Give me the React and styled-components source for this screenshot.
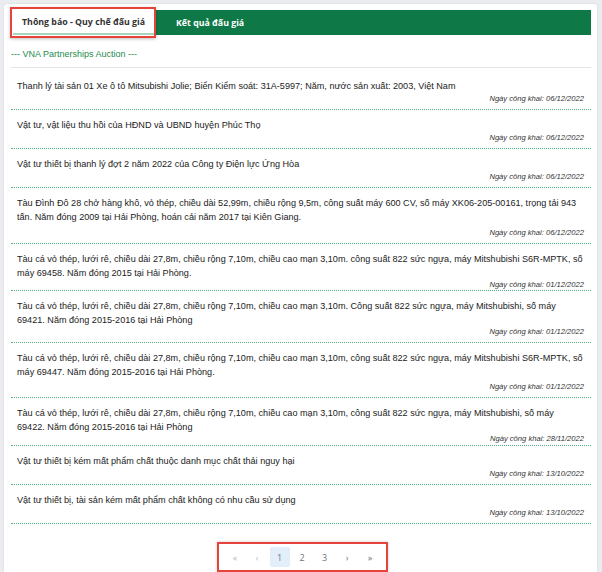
import React from 'react';
import styled, { createGlobalStyle } from 'styled-components';

const GlobalStyle = createGlobalStyle`
  html, body {
    margin: 0;
    padding: 0;
    background: #eaecef;
    font-family: "Liberation Sans", Arial, sans-serif;
    color: #333;
  }
`;

const Page = styled.div`
  width: 602px;
  height: 572px;
  overflow: hidden;
  padding: 4px 5px 0 4px;
  box-sizing: border-box;
`;

const Card = styled.div`
  background: #fff;
  border-radius: 3px 3px 0 0;
  box-shadow: 0 0 2px rgba(0, 0, 0, 0.12);
  padding: 6px 6px 0 7px;
  height: 100%;
  box-sizing: border-box;
`;

const TabBar = styled.div`
  display: flex;
  height: 25px;
  background: #0e7946;
`;

const Tab = styled.div`
  display: flex;
  align-items: center;
  padding: 0 ${p => (p.active ? '9px' : '20px')};
  font-family: "Open Sans", sans-serif;
  font-weight: 700;
  font-size: 8.8px;
  color: ${p => (p.active ? '#333' : '#fff')};
  background: ${p => (p.active ? '#fff' : 'transparent')};
  border-bottom: ${p => (p.active ? '2px solid #a8d5bd' : 'none')};
  box-sizing: border-box;
`;

const Highlight = styled.div`
  display: flex;
  margin: -3px 0 -3px -1px;
  border: 2px solid #e6433c;
  box-shadow: 0 1px 3px rgba(0, 0, 0, 0.25);
  padding: 1px 0 1px 1px;
  background: #fff;
  position: relative;
  z-index: 1;
`;

const Heading = styled.div`
  font-size: 9px;
  color: #1d8a4e;
  padding: 14px 0 8px 0;
  border-bottom: 1px solid #e0e5e8;
`;

const List = styled.div`
  display: flex;
  flex-direction: column;
  margin-top: 3px;
`;

const Item = styled.div`
  padding: 8px 7px ${p => 6 - (p.trim || 0)}px 6px;
  border-bottom: 1px dotted #4fae7e;
`;

const Title = styled.div`
  font-size: 9.1px;
  line-height: 14px;
  color: #222;
`;

const Published = styled.div`
  font-size: 7.6px;
  font-style: italic;
  line-height: 9px;
  text-align: right;
  color: #333;
  margin-top: ${p => 1 + (p.shift || 0)}px;
`;

const Footer = styled.div`
  display: flex;
  justify-content: center;
  padding-top: 18px;
`;

const PagerBox = styled.div`
  display: flex;
  align-items: center;
  gap: 2.5px;
  border: 2px solid #e6433c;
  box-shadow: 0 0 3px rgba(0, 0, 0, 0.2);
  padding: 3px 6px;
  margin-left: 2px;
`;

const PageBtn = styled.div`
  width: 20px;
  height: 20px;
  display: flex;
  align-items: center;
  justify-content: center;
  font-family: "Open Sans", sans-serif;
  font-size: 9px;
  color: ${p => (p.muted ? '#b5bac0' : '#6c757d')};
  background: ${p => (p.active ? '#e2effb' : 'transparent')};
  border-radius: 2px;
  letter-spacing: ${p => (p.tight ? '-1px' : '0')};
`;

const items = [
  { title: 'Thanh lý tài sản 01 Xe ô tô Mitsubishi Jolie; Biển Kiểm soát: 31A-5997; Năm, nước sản xuất: 2003, Việt Nam', date: '06/12/2022' },
  { title: 'Vật tư, vật liệu thu hồi của HĐND và UBND huyện Phúc Thọ', date: '06/12/2022' },
  { title: 'Vật tư thiết bị thanh lý đợt 2 năm 2022 của Công ty Điện lực Ứng Hòa', date: '06/12/2022' },
  { title: 'Tàu Đình Đô 28 chở hàng khô, vỏ thép, chiều dài 52,99m, chiều rộng 9,5m, công suất máy 600 CV, số máy XK06-205-00161, trọng tải 943 tấn. Năm đóng 2009 tại Hải Phòng, hoán cải năm 2017 tại Kiên Giang.', date: '06/12/2022', shift: 3 },
  { title: 'Tàu cá vỏ thép, lưới rê, chiều dài 27,8m, chiều rộng 7,10m, chiều cao mạn 3,10m. công suất 822 sức ngựa, máy Mitshubishi S6R-MPTK, số máy 69458. Năm đóng 2015 tại Hải Phòng.', date: '01/12/2022', shift: -1, trim: 5 },
  { title: 'Tàu cá vỏ thép, lưới rê, chiều dài 27,8m, chiều rộng 7,10m, chiều cao mạn 3,10m. Công suất 822 sức ngựa, máy Mitshubishi, số máy 69421. Năm đóng 2015-2016 tại Hải Phòng', date: '01/12/2022', shift: -1 },
  { title: 'Tàu cá vỏ thép, lưới rê, chiều dài 27,8m, chiều rộng 7,10m, chiều cao mạn 3,10m, công suất 822 sức ngựa, máy Mitshubishi S6R-MPTK, số máy 69447. Năm đóng 2015-2016 tại Hải Phòng.', date: '01/12/2022', shift: 2 },
  { title: 'Tàu cá vỏ thép, lưới rê, chiều dài 27,8m, chiều rộng 7,10m, chiều cao mạn 3,10m, công suất 822 sức ngựa, máy Mitshubishi, số máy 69422. Năm đóng 2015-2016 tại Hải Phòng', date: '28/11/2022', shift: -1, trim: 4 },
  { title: 'Vật tư thiết bị kém mất phẩm chất thuộc danh mục chất thải nguy hại', date: '13/10/2022' },
  { title: 'Vật tư thiết bị, tài sản kém mất phẩm chất không có nhu cầu sử dụng', date: '13/10/2022' },
];

export default function App() {
  return (
    <>
      <GlobalStyle />
      <Page>
        <Card>
          <TabBar>
            <Highlight>
              <Tab active>Thông báo - Quy chế đấu giá</Tab>
            </Highlight>
            <Tab>Kết quả đấu giá</Tab>
          </TabBar>
          <Heading>--- VNA Partnerships Auction ---</Heading>
          <List>
            {items.map((it, i) => (
              <Item key={i} trim={it.trim}>
                <Title>{it.title}</Title>
                <Published shift={it.shift}>Ngày công khai: {it.date}</Published>
              </Item>
            ))}
          </List>
          <Footer>
            <PagerBox>
              <PageBtn muted tight>«</PageBtn>
              <PageBtn muted>‹</PageBtn>
              <PageBtn active>1</PageBtn>
              <PageBtn>2</PageBtn>
              <PageBtn>3</PageBtn>
              <PageBtn>›</PageBtn>
              <PageBtn tight>»</PageBtn>
            </PagerBox>
          </Footer>
        </Card>
      </Page>
    </>
  );
}
